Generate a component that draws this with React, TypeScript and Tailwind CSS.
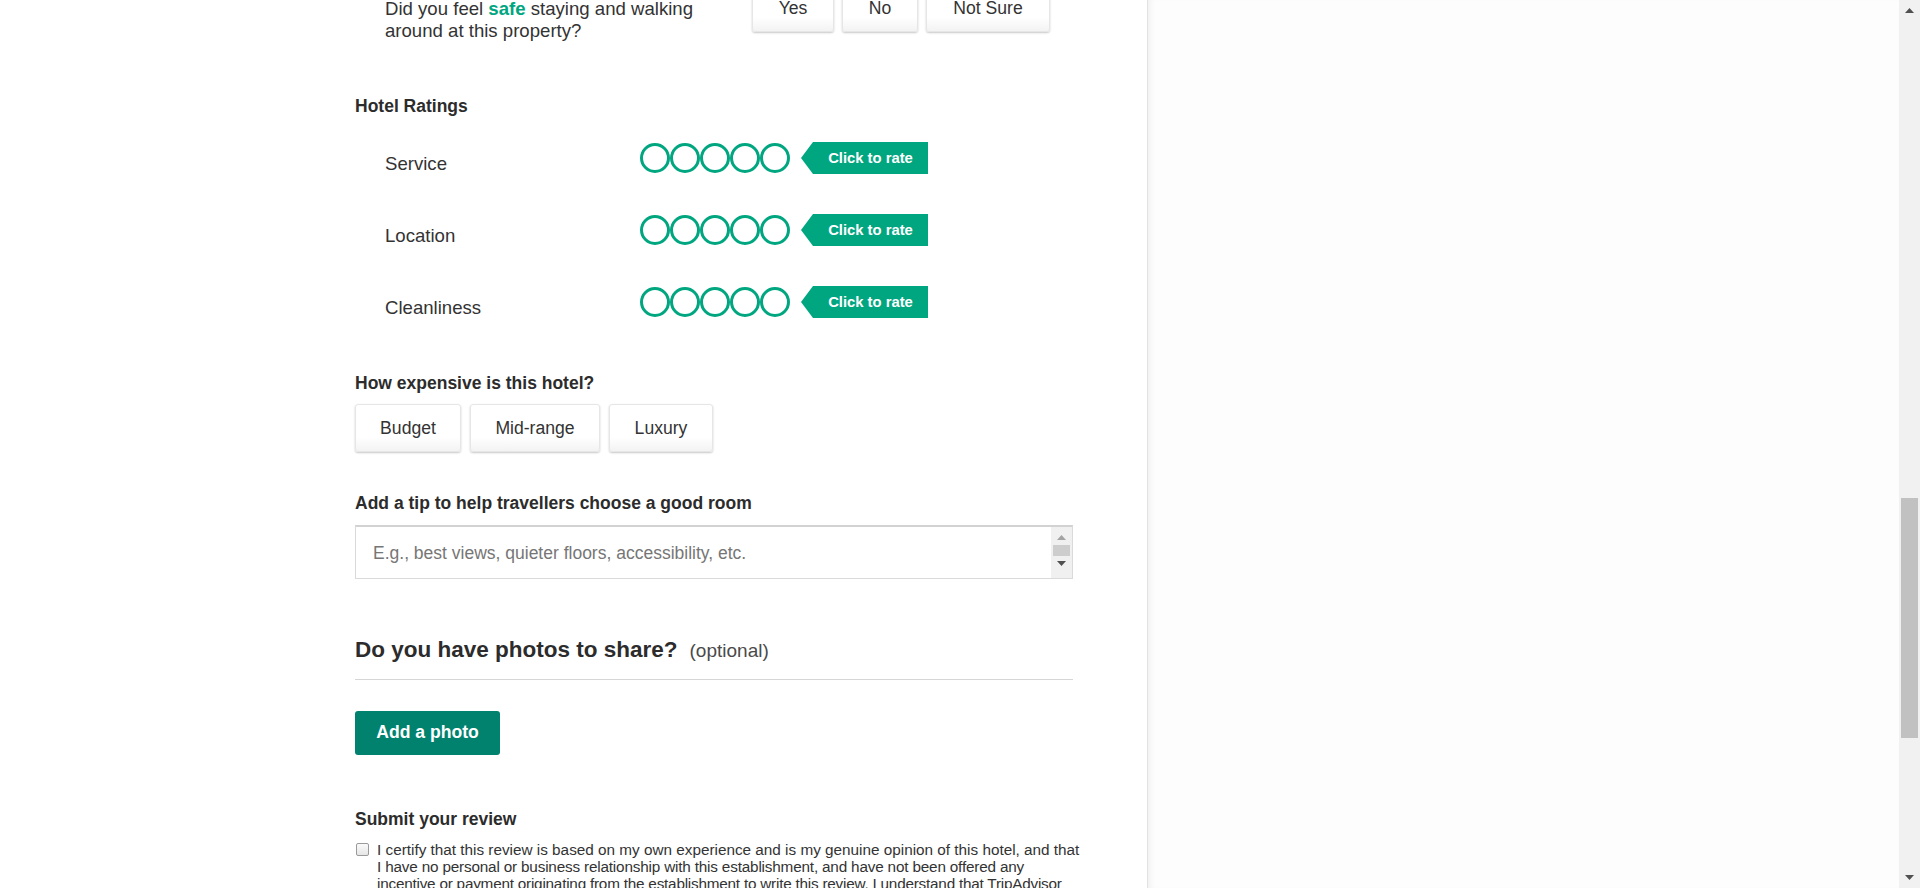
import React from 'react';

// the certification text breaks exactly as the reference does
const certifyLines = [
  'I certify that this review is based on my own experience and is my genuine opinion of this hotel, and that',
  'I have no personal or business relationship with this establishment, and have not been offered any',
  'incentive or payment originating from the establishment to write this review. I understand that TripAdvisor',
  'has a zero-tolerance policy on fake reviews.',
];

function OptionButton({ label, width }: { label: string; width: string }) {
  return (
    <button
      type="button"
      className={`${width} h-[48px] shrink-0 rounded-[3px] border border-[#e6e6e6] bg-linear-to-b from-white from-70% to-[#f3f3f3] shadow-[0_1px_2px_rgba(0,0,0,0.22)] text-[17.6px] text-[#333]`}
    >
      {label}
    </button>
  );
}

function Bubbles() {
  return (
    <div className="flex">
      {[0, 1, 2, 3, 4].map((i) => (
        <span key={i} className="block w-[30px] h-[30px] rounded-full border-[3px] border-[#00a680]" />
      ))}
    </div>
  );
}

function RateTag() {
  return (
    <div className="flex items-center">
      <span className="w-0 h-0 border-y-[16px] border-y-transparent border-r-[12px] border-r-[#00a680]" />
      <span className="h-[32px] w-[115px] bg-[#00a680] text-white font-bold text-[14.8px] flex items-center justify-center">
        Click to rate
      </span>
    </div>
  );
}

function RatingRow({ label, first }: { label: string; first?: boolean }) {
  return (
    <div className={`flex items-start h-[32px] ${first ? 'mt-[26px]' : 'mt-[40px]'}`}>
      <div className="w-[285px] pl-[30px] pt-[11px] text-[18.6px] leading-[22px]">{label}</div>
      <div className="flex items-center gap-[11px] h-[32px]">
        <Bubbles />
        <RateTag />
      </div>
    </div>
  );
}

function Arrow({ up, color }: { up?: boolean; color: string }) {
  return (
    <svg width="9" height="5" viewBox="0 0 9 5">
      <path d={up ? 'M0 5 L4.5 0 L9 5 Z' : 'M0 0 L4.5 5 L9 0 Z'} fill={color} />
    </svg>
  );
}

function PageScrollbar() {
  return (
    <div className="w-[21px] shrink-0 h-full bg-[#f1f1f1] flex flex-col items-center">
      <div className="h-[21px] flex items-center justify-center">
        <Arrow up color="#505050" />
      </div>
      <div className="h-[477px]" />
      <div className="w-[17px] h-[240px] bg-[#c1c1c1]" />
      <div className="flex-1" />
      <div className="h-[21px] flex items-center justify-center">
        <Arrow color="#505050" />
      </div>
    </div>
  );
}

export default function App() {
  return (
    <div className="h-screen w-full overflow-hidden bg-white flex font-['Liberation_Sans',Arial,sans-serif] text-[#333]">
      <div className="w-[1147px] shrink-0 pl-[355px]">
        <div className="w-[718px] -mt-[16px]">
          {/* safety question */}
          <div className="flex items-start">
            <div className="w-[397px] pl-[30px] mt-[14px] text-[18.6px] leading-[22px]">
              Did you feel <span className="font-bold text-[#00a680]">safe</span> staying and walking around at this
              property?
            </div>
            <div className="flex gap-2">
              <OptionButton label="Yes" width="w-[82px]" />
              <OptionButton label="No" width="w-[76px]" />
              <OptionButton label="Not Sure" width="w-[124px]" />
            </div>
          </div>

          <h3 className="mt-[54px] text-[17.5px] leading-[20px] font-bold text-[#2c2c2c]">Hotel Ratings</h3>
          <RatingRow label="Service" first />
          <RatingRow label="Location" />
          <RatingRow label="Cleanliness" />

          <h3 className="mt-[55px] text-[17.5px] leading-[20px] font-bold text-[#2c2c2c]">
            How expensive is this hotel?
          </h3>
          <div className="mt-[11px] flex gap-[9px]">
            <OptionButton label="Budget" width="w-[106px]" />
            <OptionButton label="Mid-range" width="w-[130px]" />
            <OptionButton label="Luxury" width="w-[104px]" />
          </div>

          <h3 className="mt-[41px] text-[17.5px] leading-[20px] font-bold text-[#2c2c2c]">
            Add a tip to help travellers choose a good room
          </h3>
          <div className="mt-[12px] h-[54px] flex border border-[#dadada] border-t-2 border-t-[#d2d2d2] bg-white">
            <textarea
              className="flex-1 h-full resize-none outline-none pl-[17px] pt-[16px] text-[17.5px] leading-[20px] placeholder:text-[#767676] font-['Liberation_Sans',Arial,sans-serif]"
              placeholder="E.g., best views, quieter floors, accessibility, etc."
            />
            <div className="w-[21px] h-full bg-[#f0f0f0] flex flex-col items-center pt-[8px]">
              <Arrow up color="#a3a3a3" />
              <div className="mt-[5px] w-[17px] h-[11px] bg-[#cdcdcd]" />
              <div className="mt-[5px]">
                <Arrow color="#505050" />
              </div>
            </div>
          </div>

          <div className="mt-[58px] pb-[13px] border-b border-[#d6d6d6] flex items-baseline">
            <h2 className="text-[22.5px] leading-[26px] font-bold text-[#2c2c2c]">Do you have photos to share?</h2>
            <span className="ml-[12px] text-[19px] text-[#4a4a4a]">(optional)</span>
          </div>

          <button
            type="button"
            className="mt-[31px] h-[44px] w-[145px] rounded-[3px] bg-[#00826f] text-white text-[17.6px] font-bold"
          >
            Add a photo
          </button>

          <h3 className="mt-[54px] text-[17.5px] leading-[20px] font-bold text-[#2c2c2c]">Submit your review</h3>
          <label className="mt-[12px] flex items-start gap-[8px]">
            <span className="mt-[2px] ml-[1px] w-[13px] h-[13px] shrink-0 rounded-[2px] border border-[#9a9a9a] bg-linear-to-b from-[#fafafa] to-[#e6e6e6]" />
            <span className="flex flex-col text-[15.3px] leading-[17px] whitespace-nowrap">
              <span>{certifyLines[0]}</span>
              <span className="tracking-[-0.18px]">{certifyLines[1]}</span>
              <span className="tracking-[-0.22px]">{certifyLines[2]}</span>
              <span>{certifyLines[3]}</span>
            </span>
          </label>
        </div>
      </div>
      <div className="flex-1 h-full bg-[#fdfdfd] border-l border-[#e2e2e2] shadow-[inset_6px_0_6px_-4px_rgba(0,0,0,0.06)]" />
      <PageScrollbar />
    </div>
  );
}
